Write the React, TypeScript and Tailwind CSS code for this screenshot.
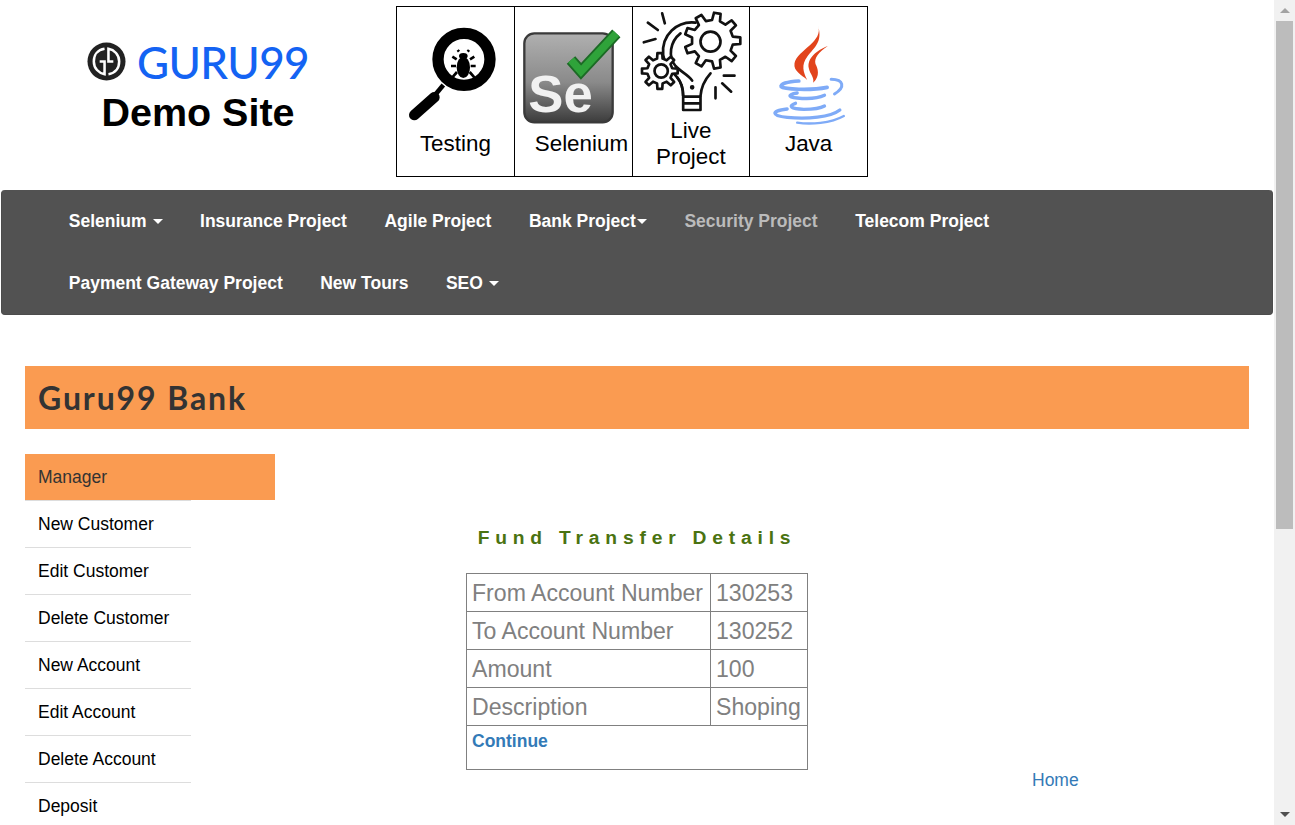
const gearPath = (cx: number, cy: number, outer: number, inner: number, teeth: number) => {
  const pts: string[] = [];
  const step = (Math.PI * 2) / teeth;
  for (let i = 0; i < teeth; i++) {
    const a = i * step;
    const list: [number, number][] = [
      [inner, a - step * 0.28],
      [outer, a - step * 0.17],
      [outer, a + step * 0.17],
      [inner, a + step * 0.28],
    ];
    list.forEach(([r, t]) => {
      pts.push(`${(cx + r * Math.cos(t)).toFixed(1)} ${(cy + r * Math.sin(t)).toFixed(1)}`);
    });
  }
  return "M" + pts.join("L") + "Z";
};

const TestingIcon = () => (
  <svg viewBox="30 78 300 315" className="block w-[100px] h-[105px] mx-auto overflow-visible">
    <circle cx="207" cy="178" r="78" fill="none" stroke="#000" strokeWidth="34" />
    <path d="M145 255L120 285" stroke="#000" strokeWidth="14" />
    <path d="M118 292L58 345" stroke="#000" strokeWidth="32" strokeLinecap="round" />
    <ellipse cx="205" cy="202" rx="20" ry="32" fill="#000" />
    <ellipse cx="205" cy="168" rx="13" ry="9" fill="#000" />
    <path
      d="M192 155L188 150M218 155L222 150M185 178L172 170M225 178L238 170M183 198L168 198M227 198L242 198M186 216L172 232M224 216L238 232"
      stroke="#000"
      strokeWidth="8"
      fill="none"
    />
  </svg>
);

const SeleniumIcon = () => (
  <svg viewBox="384 78 300 315" className="block w-[100px] h-[105px] mx-auto overflow-visible">
    <defs>
      <linearGradient id="seBg" x1="0" y1="0" x2="0" y2="1">
        <stop offset="0" stopColor="#b0b0b0" />
        <stop offset="0.55" stopColor="#8a8a8a" />
        <stop offset="1" stopColor="#3c3c3c" />
      </linearGradient>
    </defs>
    <rect x="388" y="100" width="265" height="267" rx="30" fill="url(#seBg)" stroke="#3a3a3a" strokeWidth="7" />
    <text x="400" y="335" fontSize="158" fontWeight="700" fill="#f1f1f1" fontFamily="'Liberation Sans', sans-serif">
      Se
    </text>
    <path d="M528 180L558 214L664 100" fill="none" stroke="#1c6a25" strokeWidth="34" />
    <path d="M528 180L558 214L664 100" fill="none" stroke="#2fa33a" strokeWidth="23" />
  </svg>
);

const LiveIcon = () => (
  <svg
    viewBox="31.5 39 300 315"
    className="block w-[100px] h-[105px] mx-auto overflow-visible"
    fill="none"
    stroke="#111"
    strokeWidth="8"
    strokeLinecap="round"
    strokeLinejoin="round"
  >
    <path d={gearPath(246, 122, 84, 62, 9)} fill="#fff" />
    <circle cx="240" cy="125" r="30" />
    <path d="M195 68C140 62 92 105 98 165C100 190 120 210 140 232C152 246 158 265 158 288" />
    <path d="M150 100C118 125 112 170 135 198C150 215 175 225 185 242" />
    <path d="M210 288C212 262 222 240 240 220" />
    <path d={gearPath(88, 213, 54, 38, 8)} fill="#fff" />
    <circle cx="92" cy="213" r="20" />
    <path d="M140 232C152 246 158 265 158 288" />
    <path d="M158 290H210V330H158ZM158 310H210" />
    <circle cx="185" cy="262" r="3" fill="#111" />
    <path d="M95 40L103 70M52 68L82 90M40 127L75 117M280 227H312M275 250L302 275M255 262V295" />
  </svg>
);

const JavaIcon = () => (
  <svg viewBox="385.5 78 300 315" className="block w-[100px] h-[105px] mx-auto overflow-visible" fill="none">
    <path d="M562 75C582 125 500 150 492 190C488 215 515 225 530 240C518 215 512 195 530 170C552 142 578 125 562 75Z" fill="#e2441c" />
    <path d="M592 138C560 150 528 175 535 205C538 222 552 232 548 248C570 228 562 205 555 192C550 175 565 155 592 138Z" fill="#e2441c" />
    <g stroke="#7fabf7" strokeLinecap="round">
      <path d="M505 243C470 245 448 252 452 260C460 268 540 272 590 262" strokeWidth="11" />
      <path d="M602 238C640 238 645 262 612 282" strokeWidth="9" />
      <path d="M500 279C470 284 472 292 500 294C530 297 565 294 582 286" strokeWidth="10" />
      <path d="M495 310C472 318 480 326 520 328C550 328 570 325 582 318" strokeWidth="10" />
      <path d="M470 327C420 332 422 348 470 352C530 358 600 352 628 330" strokeWidth="10" />
      <path d="M500 368C540 374 600 370 640 348" strokeWidth="7" />
    </g>
  </svg>
);

const Logo = () => (
  <svg viewBox="0 0 40 40" className="w-[39px] h-[39px] shrink-0">
    <circle cx="20" cy="20" r="19.5" fill="#222" />
    <path d="M18 7C11 8 7 13 7 20C7 27 12 32 18 33V20H13" fill="none" stroke="#fff" strokeWidth="2.6" />
    <path d="M22 33C29 32 33 27 33 20C33 13 28 8 22 7V20H27" fill="none" stroke="#fff" strokeWidth="2.6" />
  </svg>
);

const Caret = () => (
  <span className="inline-block ml-[6px] align-middle w-0 h-0 border-x-[5px] border-x-transparent border-t-[5px] border-t-white" />
);

const navItems = [
  { label: "Selenium", caret: "spaced" },
  { label: "Insurance Project" },
  { label: "Agile Project" },
  { label: "Bank Project", caret: "tight" },
  { label: "Security Project", muted: true },
  { label: "Telecom Project" },
  { label: "Payment Gateway Project" },
  { label: "New Tours" },
  { label: "SEO", caret: "spaced" },
];

const sideItems = [
  "New Customer",
  "Edit Customer",
  "Delete Customer",
  "New Account",
  "Edit Account",
  "Delete Account",
  "Deposit",
];

const rows = [
  ["From Account Number", "130253"],
  ["To Account Number", "130252"],
  ["Amount", "100"],
  ["Description", "Shoping"],
];

const tiles = [
  { icon: <TestingIcon />, label: "Testing" },
  { icon: <SeleniumIcon />, label: "Selenium" },
  { icon: <LiveIcon />, label: "Live Project" },
  { icon: <JavaIcon />, label: "Java" },
];

const App = () => {
  return (
    <div className="flex h-[825px] w-[1295px] overflow-hidden bg-white font-['Liberation_Sans',Arial,sans-serif]">
      <div className="flex-1 min-w-0">
        {/* header */}
        <div className="flex h-[190px]">
          <div className="w-[396px] flex flex-col items-center pt-[40px]">
            <div className="flex items-center gap-[11px] h-[43px]">
              <Logo />
              <span className="font-['Lato',sans-serif] font-medium text-[44px] leading-none text-[#1463f3] tracking-[-0.6px]">
                GURU99
              </span>
            </div>
            <div className="font-bold text-[39.5px] leading-[50px] text-black mt-[4px]">Demo Site</div>
          </div>
          <table className="border-collapse mt-[6px] h-[171px] w-[472px] table-fixed">
            <tbody>
              <tr>
                {tiles.map((t) => (
                  <td key={t.label} className="border border-black p-0 align-middle text-center">
                    {t.icon}
                    <div className="text-[22.4px] leading-[26px] text-black px-[20px]">{t.label}</div>
                  </td>
                ))}
              </tr>
            </tbody>
          </table>
        </div>

        {/* nav */}
        <div className="mx-px h-[125px] bg-[#525252] rounded-[4px] border border-[#4c4c4c] border-t-0">
          <ul className="flex flex-wrap w-[1100px] ml-[48px]">
            {navItems.map((item) => (
              <li
                key={item.label}
                className={`h-[62px] flex items-center px-[18.75px] text-[17.5px] font-bold ${
                  item.muted ? "text-[#bbbbbb]" : "text-white"
                }`}
              >
                {item.label}
                {item.caret === "spaced" && <Caret />}
                {item.caret === "tight" && (
                  <span className="inline-block ml-px w-0 h-0 border-x-[5px] border-x-transparent border-t-[5px] border-t-white" />
                )}
              </li>
            ))}
          </ul>
        </div>

        {/* bank title */}
        <div className="mx-[25px] mt-[51px] h-[63px] bg-[#fa9b51] flex items-center pl-[13px]">
          <h2 className="font-['Lato',sans-serif] font-bold text-[32px] text-[#333333] tracking-[1.9px]">Guru99 Bank</h2>
        </div>

        <div className="flex mx-[25px] mt-[25px]">
          <div className="w-[250px] shrink-0">
            <div className="h-[46px] bg-[#fa9b51] flex items-center pl-[13px] text-[17.5px] text-[#333333]">Manager</div>
            {sideItems.map((s) => (
              <div
                key={s}
                className="w-[166px] h-[47px] flex items-center pl-[13px] text-[17.5px] text-black border-t border-[#dddddd]"
              >
                {s}
              </div>
            ))}
          </div>

          <div className="pl-[191px] flex items-start">
            <div className="w-[342px] shrink-0">
              <h3 className="mt-[73px] text-center text-[19.25px] leading-[22px] font-bold tracking-[5.8px] text-[#4a7311]">
                Fund Transfer Details
              </h3>
              <table className="mt-[24px] w-[342px] border-collapse text-[23.1px] text-[#808080]">
                <tbody>
                  {rows.map(([k, v]) => (
                    <tr key={k} className="h-[38px]">
                      <td className="border border-[#808080] px-[5px] py-0 leading-[26px] w-[244px]">{k}</td>
                      <td className="border border-[#808080] px-[5px] py-0 leading-[26px]">{v}</td>
                    </tr>
                  ))}
                  <tr className="h-[44px]">
                    <td colSpan={2} className="border border-[#808080] px-[5px] pt-[4px] align-top">
                      <a className="text-[17.5px] leading-[22px] font-bold text-[#337ab7] block">Continue</a>
                    </td>
                  </tr>
                </tbody>
              </table>
            </div>
            <a className="ml-[224px] mt-[315px] text-[17.5px] leading-[22px] text-[#337ab7]">Home</a>
          </div>
        </div>
      </div>

      {/* scrollbar */}
      <div className="w-[21px] h-full bg-[#f1f1f1] flex flex-col items-center shrink-0">
        <div className="h-[21px] flex items-center justify-center">
          <span className="w-0 h-0 border-x-[5px] border-x-transparent border-b-[5px] border-b-[#a3a3a3]" />
        </div>
        <div className="w-[17px] h-[508px] bg-[#bcbcbc]" />
        <div className="flex-1" />
        <div className="h-[21px] flex items-center justify-center">
          <span className="w-0 h-0 border-x-[5px] border-x-transparent border-t-[5px] border-t-[#505050]" />
        </div>
      </div>
    </div>
  );
};

export default App;
